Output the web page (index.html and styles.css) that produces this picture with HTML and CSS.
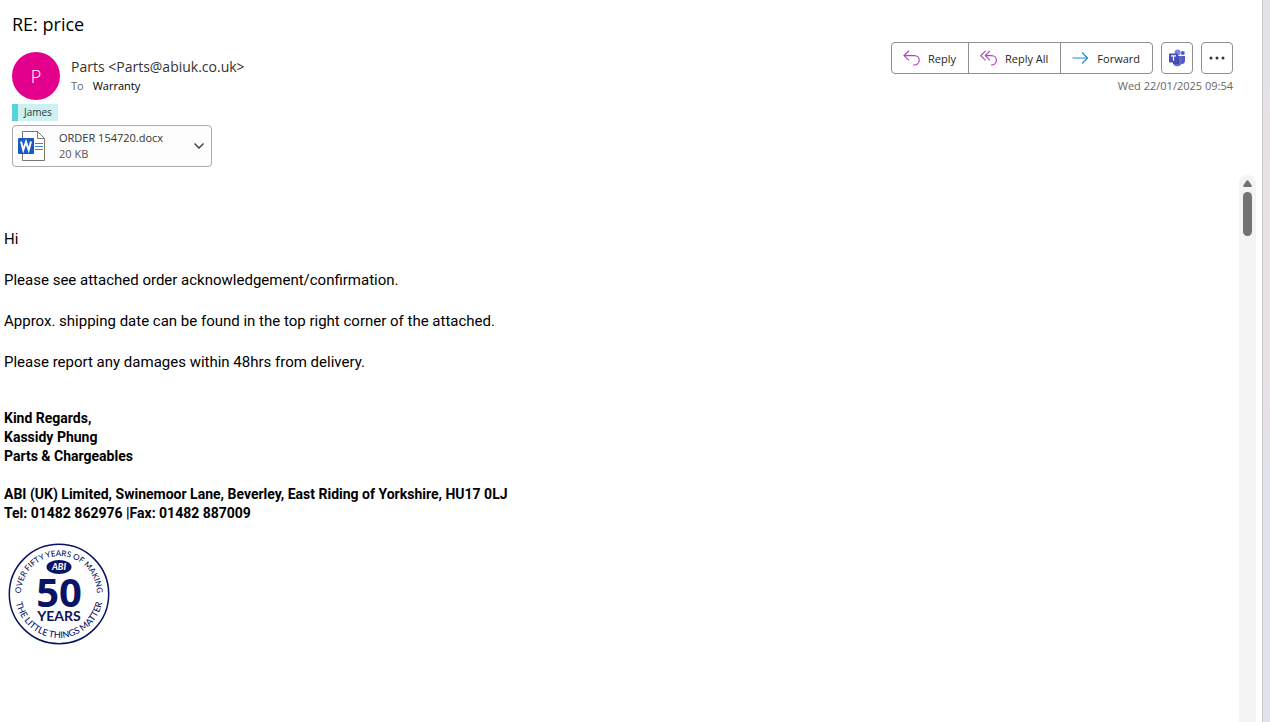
FILE: index.html
```html
<!DOCTYPE html>
<html lang="en">
<head>
    <meta charset="UTF-8">
    <meta name="viewport" content="width=device-width, initial-scale=1.0">
    <title>RE: price</title>
    <link rel="stylesheet" href="styles.css">
</head>
<body>
    <main class="reader">
        <header class="mail-header">
            <h1 class="subject">RE: price</h1>
            <div class="meta">
                <div class="avatar">P</div>
                <div class="people">
                    <div class="sender">Parts &lt;Parts@abiuk.co.uk&gt;</div>
                    <div class="recipient"><span class="to">To</span>Warranty</div>
                </div>
                <div class="side">
                    <div class="actions">
                        <div class="button-group">
                            <button class="action" type="button">
                                <svg width="17" height="16" viewBox="0 0 17 16" fill="none" stroke="#b146c2" stroke-width="1.2"><path d="M6 .8 1 5.6l5 4.8M1 5.6h10.5a4.6 4.6 0 0 1 0 9.4H10"/></svg>
                                Reply
                            </button>
                            <button class="action" type="button">
                                <svg width="17" height="16" viewBox="0 0 17 16" fill="none" stroke="#b146c2" stroke-width="1.2"><path d="M5.5.8.8 5.6l4.7 4.8M10 .8 5.3 5.6l4.7 4.8M5.3 5.6h6.4a4.6 4.6 0 0 1 0 9.4H11"/></svg>
                                Reply All
                            </button>
                            <button class="action" type="button">
                                <svg width="17" height="16" viewBox="0 0 17 16" fill="none" stroke="#1e8bcd" stroke-width="1.2"><path d="M.5 8h15M10 2.5 15.5 8 10 13.5"/></svg>
                                Forward
                            </button>
                        </div>
                        <button class="square" type="button" aria-label="Share to Teams">
                            <svg width="18" height="18" viewBox="0 0 18 18">
                                <circle cx="14.8" cy="4" r="2" fill="#5059c9"/>
                                <path d="M12 7h5v5a3 3 0 0 1-5 2.2z" fill="#5059c9"/>
                                <circle cx="9.6" cy="3.6" r="3" fill="#7b83eb"/>
                                <path d="M5 7h9v5.5a4.8 4.8 0 0 1-9 2.3z" fill="#5f67d3"/>
                                <path d="M5 7h6v8H5z" fill="#4048a8"/>
                                <rect x="1" y="4.5" width="9" height="9" rx="1" fill="#464eb8"/>
                                <path d="M3 6.8h5M5.5 6.8v5" stroke="#fff" stroke-width="1.2"/>
                            </svg>
                        </button>
                        <button class="square" type="button" aria-label="More actions">
                            <svg width="16" height="4" viewBox="0 0 16 4" fill="#333"><circle cx="2" cy="2" r="1.5"/><circle cx="8" cy="2" r="1.5"/><circle cx="14" cy="2" r="1.5"/></svg>
                        </button>
                    </div>
                    <time class="date" datetime="2025-01-22T09:54">Wed 22/01/2025 09:54</time>
                </div>
            </div>
            <div class="category">James</div>
            <button class="attachment" type="button">
                <svg width="28" height="32" viewBox="0 0 28 32">
                    <path d="M4.5 1.5h15l7 7v22h-22z" fill="#fff" stroke="#797774"/>
                    <path d="M19.5 1.5v7h7" fill="none" stroke="#797774"/>
                    <path d="M17 13.5h8M17 16.5h8M17 19.5h8" stroke="#2b88d8"/>
                    <rect y="8" width="16" height="16" rx="1" fill="#185abd"/>
                    <path d="M3 11.5l2.3 8.5L8 12l2.7 8L13 11.5" fill="none" stroke="#fff" stroke-width="2"/>
                </svg>
                <span class="file"><span>ORDER 154720.docx</span><span class="file-size">20 KB</span></span>
                <svg width="10" height="6" viewBox="0 0 10 6" fill="none" stroke="#444" stroke-width="1.5"><path d="M.5.5 5 5 9.5.5"/></svg>
            </button>
        </header>
        <div class="content">
            <article class="message">
                <p>Hi</p>
                <p>Please see attached order acknowledgement/confirmation.</p>
                <p>Approx. shipping date can be found in the top right corner of the attached.</p>
                <p>Please report any damages within 48hrs from delivery.</p>
                <address class="signature">
                    <div>Kind Regards,</div>
                    <div>Kassidy Phung</div>
                    <div>Parts &amp; Chargeables</div>
                    <div class="company">ABI (UK) Limited, Swinemoor Lane, Beverley, East Riding of Yorkshire, HU17 0LJ</div>
                    <div>Tel: 01482 862976 |Fax: 01482 887009</div>
                </address>
                <svg class="logo" width="102" height="102" viewBox="0 0 102 102">
                    <defs>
                        <path id="arc-top" d="M13 51a38 38 0 0 1 76 0"/>
                        <path id="arc-bottom" d="M7 51a44 44 0 0 0 88 0"/>
                    </defs>
                    <circle cx="51" cy="51" r="49.7" fill="#fff" stroke="#0a1464" stroke-width="1.5"/>
                    <text class="ring"><textPath href="#arc-top" startOffset="50%">OVER FIFTY YEARS OF MAKING</textPath></text>
                    <text class="ring ring-bottom"><textPath href="#arc-bottom" startOffset="50%">THE LITTLE THINGS MATTER</textPath></text>
                    <ellipse cx="51" cy="24" rx="12.5" ry="7"/>
                    <text class="abi" x="51" y="27">ABI</text>
                    <text class="fifty" x="51" y="64">50</text>
                    <text class="years" x="51" y="78">YEARS</text>
                </svg>
            </article>
            <div class="scrollbar">
                <svg width="9" height="7" viewBox="0 0 9 7" fill="#737373"><path d="M3.7.6Q4.5-.2 5.3.6L8.8 5.5Q9 7 8 7H1Q0 7 .2 5.5z"/></svg>
                <div class="thumb"></div>
            </div>
        </div>
    </main>
    <div class="edge"></div>
</body>
</html>
```
FILE: styles.css
```css
* {
    box-sizing: border-box;
}
body {
    display: flex;
    min-height: 100vh;
    margin: 0;
    background-color: #fff;
    color: #000;
    font-family: "Open Sans", "Noto Sans", sans-serif;
    font-size: 11px;
}
button {
    padding: 0;
    border: 1px solid #8f8f8f;
    background-color: #fff;
    color: #262626;
    font: inherit;
}
.reader {
    flex: 1;
    display: flex;
    flex-direction: column;
}
/* Header */
.mail-header {
    padding: 10px 29px 0 12px;
}
.subject {
    margin: 0;
    font-size: 18px;
    line-height: 28px;
    font-weight: 400;
}
.meta {
    display: flex;
    align-items: flex-start;
    margin-top: 4px;
}
.avatar {
    width: 48px;
    height: 48px;
    margin-top: 10px;
    border-radius: 50%;
    background-color: #e3008c;
    color: #fff;
    font-size: 18px;
    font-weight: 300;
    line-height: 48px;
    text-align: center;
}
.people {
    flex: 1;
    margin: 14px 0 0 11px;
}
.sender {
    color: #333;
    font-size: 14px;
    line-height: 21px;
}
.recipient {
    line-height: 18px;
}
.to {
    margin-right: 9px;
    color: #666;
}
.side {
    display: flex;
    flex-direction: column;
    align-items: flex-end;
}
.actions {
    display: flex;
    gap: 8px;
}
.button-group {
    display: flex;
}
.action {
    display: flex;
    align-items: center;
    gap: 8px;
    height: 32px;
    padding: 0 12px 0 11px;
}
.action + .action {
    margin-left: -1px;
}
.action:first-child {
    border-radius: 4px 0 0 4px;
}
.action:last-child {
    border-radius: 0 4px 4px 0;
}
.square {
    display: flex;
    align-items: center;
    justify-content: center;
    width: 32px;
    height: 32px;
    border-radius: 4px;
}
.date {
    margin-top: 3px;
    color: #666;
    line-height: 18px;
}
.category {
    width: max-content;
    margin-top: 4px;
    padding: 0 6px;
    border-left: 6px solid #58d3db;
    background-color: #cbf1f2;
    color: #333;
    font-size: 10px;
    line-height: 17px;
}
.attachment {
    display: flex;
    align-items: center;
    width: 200px;
    height: 42px;
    margin-top: 4px;
    padding: 0 7px 0 5px;
    border-color: #ababab;
    border-radius: 4px;
    background-color: #fdfdfd;
    color: #333;
    text-align: left;
}
.file {
    flex: 1;
    display: flex;
    flex-direction: column;
    margin-left: 13px;
    line-height: 16px;
}
.file-size {
    color: #555;
}
/* Message */
.content {
    flex: 1;
    display: flex;
    margin-top: 8px;
    padding-right: 6px;
}
.message {
    flex: 1;
    padding: 54px 4px 0;
    font-family: Roboto, "Liberation Sans", sans-serif;
    font-size: 15px;
    line-height: 20px;
}
.message p {
    margin: 0 0 21px;
}
.signature {
    margin-top: 37px;
    font-size: 14px;
    font-style: normal;
    font-weight: 700;
    line-height: 19px;
}
.company {
    margin-top: 19px;
}
.logo {
    display: block;
    margin: 20px 0 0 4px;
    fill: #0a1464;
    font-family: Lato, sans-serif;
    text-anchor: middle;
}
.ring {
    font-size: 8px;
    font-weight: 500;
}
.ring-bottom {
    font-size: 9px;
}
.abi {
    fill: #fff;
    font-size: 9px;
    font-style: italic;
    font-weight: 900;
}
.fifty {
    font-family: "Open Sans", sans-serif;
    font-size: 40px;
    font-weight: 700;
}
.years {
    font-size: 14px;
    font-weight: 700;
}
/* Scrollbar and window edge */
.scrollbar {
    display: flex;
    flex-direction: column;
    align-items: center;
    gap: 5px;
    width: 17px;
    padding-top: 5px;
    border-radius: 8px 8px 0 0;
    background-color: #f4f4f4;
}
.thumb {
    width: 9px;
    height: 44px;
    border-radius: 5px;
    background-color: #737373;
}
.edge {
    width: 8px;
    border-left: 1px solid #c8c8cc;
    background: linear-gradient(#e3e3e5 10%, #e9e2e4 30%, #e9e2e4 50%, #e2e2ea 65%);
}
```
